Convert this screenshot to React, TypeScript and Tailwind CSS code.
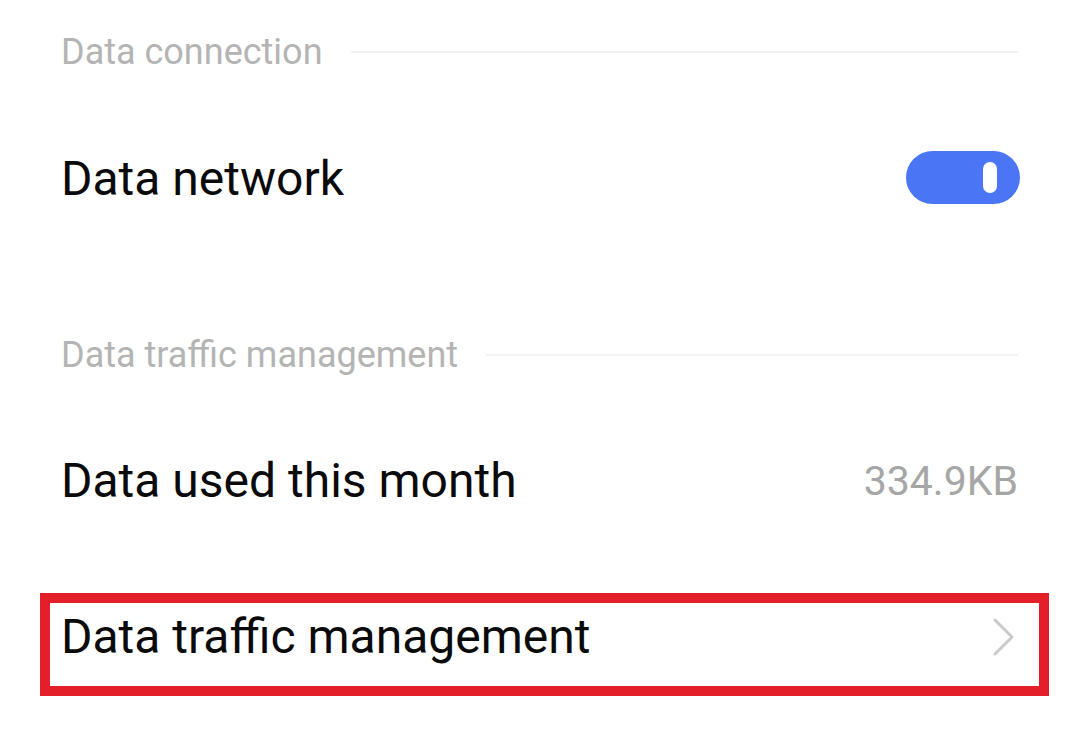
const font = { fontFamily: "Roboto, 'Noto Sans', sans-serif" };

function SectionHeader({ title }: { title: string }) {
  return (
    <div className="flex h-[78px] items-center pl-[61px] pr-[62px]">
      <span className="text-[36px] leading-[78px] text-[#b4b4b4]">{title}</span>
      <div className="ml-[28px] h-[2px] flex-1 bg-[#f3f3f3]" />
    </div>
  );
}

function Toggle() {
  return (
    <div className="flex h-[53px] w-[114px] items-center justify-end rounded-full bg-[#4a75f5] pr-[23px]">
      <div className="h-[31px] w-[14px] rounded-full bg-white" />
    </div>
  );
}

function Chevron() {
  return (
    <svg width="24" height="40" viewBox="0 0 24 40" fill="none">
      <path d="M3 3 L20 20 L3 37" stroke="#c9c9c9" strokeWidth="3" strokeLinecap="round" strokeLinejoin="round" />
    </svg>
  );
}

export default function App() {
  return (
    <div className="h-[749px] w-[1080px] overflow-hidden bg-white text-black" style={font}>
      <div className="flex h-[104px] items-center pl-[61px] pr-[62px]">
        <span className="text-[36px] leading-[78px] text-[#b4b4b4]">Data connection</span>
        <div className="ml-[28px] h-[2px] flex-1 bg-[#f3f3f3]" />
      </div>

      <div className="flex h-[150px] items-center justify-between pl-[61px] pr-[60px]">
        <span className="text-[48px] leading-[60px] text-[#0a0a0a]">Data network</span>
        <div className="-mt-[3px]">
          <Toggle />
        </div>
      </div>

      <div className="mt-[62px]">
        <SectionHeader title="Data traffic management" />
      </div>

      <div className="mt-[9px] flex h-[156px] items-center justify-between pl-[61px] pr-[62px]">
        <span className="text-[48px] leading-[60px] text-[#0a0a0a]">Data used this month</span>
        <span className="text-[41px] leading-[60px] text-[#a6a6a6]">334.9KB</span>
      </div>

      <div className="relative flex h-[156px] items-center justify-between pl-[61px] pr-[64px]">
        <span className="text-[48px] leading-[60px] text-[#0a0a0a]">Data traffic management</span>
        <Chevron />
        <div className="pointer-events-none absolute left-[40px] top-[34px] h-[103px] w-[1009px] border-[10px] border-[#e3202a]" />
      </div>
    </div>
  );
}
